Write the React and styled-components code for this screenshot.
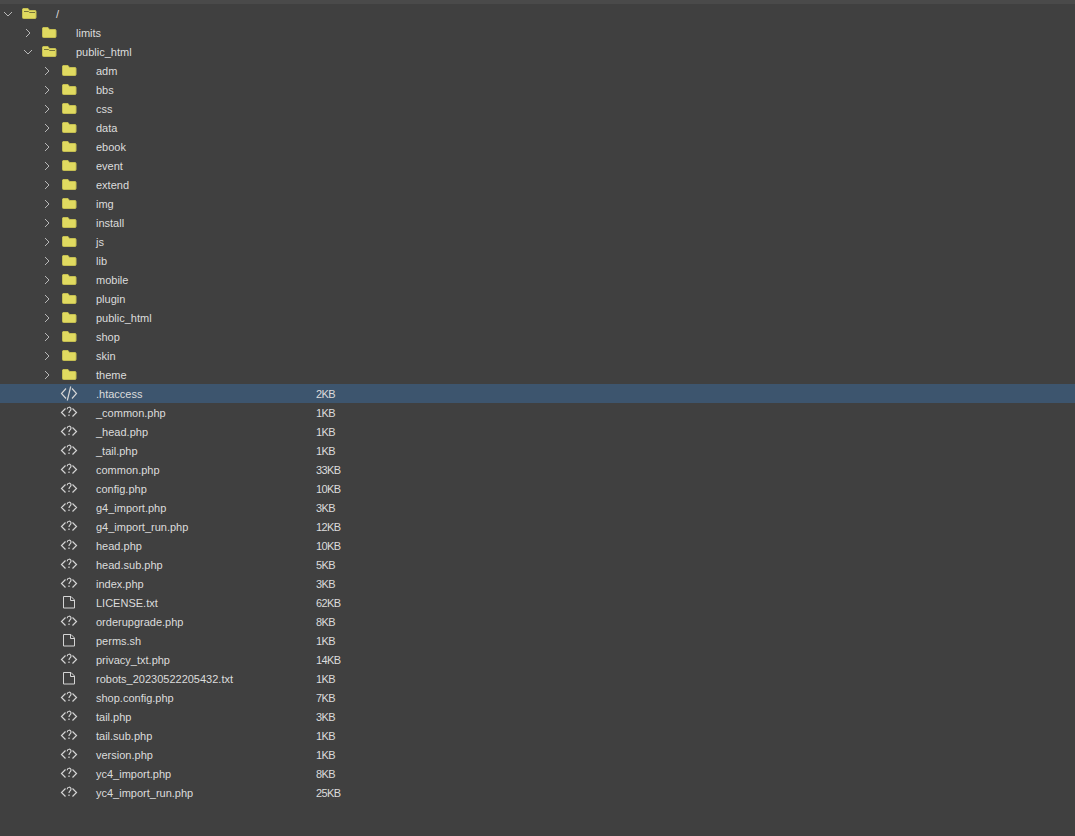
import React from "react";
import styled, { createGlobalStyle } from "styled-components";

const GlobalStyle = createGlobalStyle`
  html, body {
    margin: 0;
    padding: 0;
    background: #404040;
  }
`;

const Page = styled.div`
  width: 1075px;
  height: 836px;
  overflow: hidden;
  background: #404040;
  font-family: "Liberation Sans", Arial, sans-serif;
  font-size: 11px;
  color: #dcdcdc;
`;

const TopBar = styled.div`
  height: 4px;
  background: #4a4a4a;
`;

const Row = styled.div`
  display: flex;
  align-items: center;
  height: 19px;
  padding-left: ${(p) => p.$depth * 20}px;
  background: ${(p) => (p.$selected ? "#3d556e" : "transparent")};
`;

const Arrow = styled.svg`
  width: 10px;
  height: 10px;
  flex: none;
  margin-left: ${(p) => 3 - p.$depth / 2}px;
  margin-right: ${(p) => 7 + p.$depth / 2}px;
  fill: none;
  stroke: #b8b8b8;
  stroke-width: 1;
`;

const IconSlot = styled.svg`
  width: 18px;
  height: 17px;
  flex: none;
  margin-right: 18px;
`;

const Name = styled.span`
  width: 220px;
  flex: none;
  white-space: nowrap;
`;

const Size = styled.span`
  white-space: nowrap;
  letter-spacing: -0.6px;
`;

const folderBody = "M3 3.5h5l1.5 2h5.5a1 1 0 0 1 1 1v6a1 1 0 0 1-1 1H3.5a1 1 0 0 1-1-1V4z";

function ClosedFolder() {
  return (
    <IconSlot viewBox="0 0 18 17">
      <path d={folderBody} fill="#e0da60" stroke="#c4be52" strokeWidth="1" />
    </IconSlot>
  );
}

function OpenFolder() {
  return (
    <IconSlot viewBox="0 0 18 17">
      <path d={folderBody} fill="#e0da60" stroke="#c4be52" strokeWidth="1" />
      <path d="M4 6.5h4.5l1 1H15" stroke="#77743a" strokeWidth="1" fill="none" />
    </IconSlot>
  );
}

function CodeIcon({ slash }) {
  return (
    <IconSlot viewBox="0 0 18 17" fill="none" stroke="#d4d4d4" strokeWidth="1.2">
      {slash ? (
        <>
          <path d="M6 3.5 1.5 8.5 6 13.5M12 3.5l4.5 5-4.5 5" />
          <path d="M10.7 1.5 7.3 15.5" />
        </>
      ) : (
        <>
          <path d="M5.5 4.5 1.5 8.5l4 4M12.5 4.5l4 4-4 4" />
          <path d="M7.2 5.2c0-2.6 3.8-2.6 3.8-.2 0 1.9-2 1.9-2 4M9 10.5v1.6" />
        </>
      )}
    </IconSlot>
  );
}

function FileIcon() {
  return (
    <IconSlot viewBox="0 0 18 17" fill="none" stroke="#d4d4d4" strokeWidth="1">
      <path d="M3.5 2.5h7.5l3.5 3.5v8h-11zM10.5 2.5v4h4" />
    </IconSlot>
  );
}

const folders = [
  "adm", "bbs", "css", "data", "ebook", "event", "extend", "img", "install", "js",
  "lib", "mobile", "plugin", "public_html", "shop", "skin", "theme",
];

const files = [
  [".htaccess", "2KB", "tag"],
  ["_common.php", "1KB", "php"],
  ["_head.php", "1KB", "php"],
  ["_tail.php", "1KB", "php"],
  ["common.php", "33KB", "php"],
  ["config.php", "10KB", "php"],
  ["g4_import.php", "3KB", "php"],
  ["g4_import_run.php", "12KB", "php"],
  ["head.php", "10KB", "php"],
  ["head.sub.php", "5KB", "php"],
  ["index.php", "3KB", "php"],
  ["LICENSE.txt", "62KB", "file"],
  ["orderupgrade.php", "8KB", "php"],
  ["perms.sh", "1KB", "file"],
  ["privacy_txt.php", "14KB", "php"],
  ["robots_20230522205432.txt", "1KB", "file"],
  ["shop.config.php", "7KB", "php"],
  ["tail.php", "3KB", "php"],
  ["tail.sub.php", "1KB", "php"],
  ["version.php", "1KB", "php"],
  ["yc4_import.php", "8KB", "php"],
  ["yc4_import_run.php", "25KB", "php"],
];

function Chevron({ open, depth }) {
  return (
    <Arrow viewBox="0 0 10 10" $depth={depth}>
      {open ? <path d="M1 3l4 4 4-4" /> : <path d="M3 1l4 4-4 4" />}
    </Arrow>
  );
}

function FolderRow({ name, depth, open }) {
  return (
    <Row $depth={depth}>
      <Chevron open={open} depth={depth} />
      {open ? <OpenFolder /> : <ClosedFolder />}
      <Name>{name}</Name>
    </Row>
  );
}

export default function App() {
  return (
    <Page>
      <GlobalStyle />
      <TopBar />
      <FolderRow name="/" depth={0} open />
      <FolderRow name="limits" depth={1} />
      <FolderRow name="public_html" depth={1} open />
      {folders.map((name) => (
        <FolderRow key={name} name={name} depth={2} />
      ))}
      {files.map(([name, size, kind]) => (
        <Row key={name} $depth={3} $selected={kind === "tag"}>
          {kind === "file" ? <FileIcon /> : <CodeIcon slash={kind === "tag"} />}
          <Name>{name}</Name>
          <Size>{size}</Size>
        </Row>
      ))}
    </Page>
  );
}
